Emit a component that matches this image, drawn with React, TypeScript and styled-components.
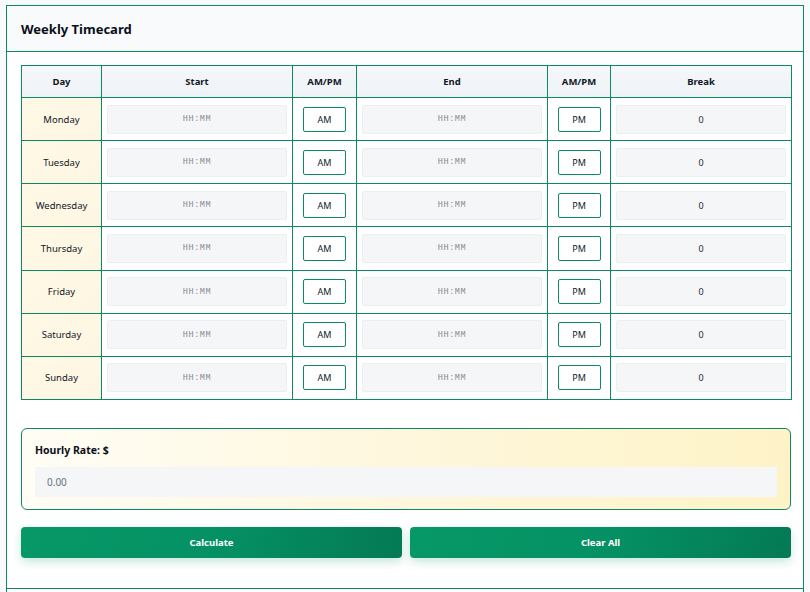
import React from "react";
import styled, { createGlobalStyle } from "styled-components";

const Global = createGlobalStyle`
  html, body { margin: 0; padding: 0; background: #f8fafb; }
  body { font-family: "Noto Sans", "Open Sans", sans-serif; color: #111827; }
  * { box-sizing: border-box; }
`;

const Page = styled.div`
  padding: 5px 6px 0 6px;
`;

const Card = styled.div`
  background: #ffffff;
  border: 1px solid #0e8a62;
  border-bottom: none;
  min-height: 600px;
`;

const Header = styled.div`
  height: 46px;
  display: flex;
  align-items: center;
  padding: 0 14px;
  background: #f8fafc;
  border-bottom: 1px solid #0e8a62;
`;

const Title = styled.h1`
  margin: 0;
  font-size: 13px;
  font-weight: 700;
  color: #0b0f19;
`;

const Body = styled.div`
  padding: 13px 12px 30px 14px;
  display: flex;
  flex-direction: column;
`;

const Table = styled.table`
  width: 770px;
  border-collapse: collapse;
  table-layout: fixed;
  border: 1px solid #0e8a62;
`;

const Th = styled.th`
  height: 32px;
  border: 1px solid #0e8a62;
  background: linear-gradient(180deg, #f5f7fa 0%, #eef2f6 100%);
  font-size: 9.5px;
  font-weight: 700;
  color: #111827;
  text-align: center;
  padding: 0;
`;

const Td = styled.td<{ $day?: boolean }>`
  height: 43.15px;
  border: 1px solid #0e8a62;
  padding: 0 5px;
  text-align: center;
  vertical-align: middle;
  font-size: 9.5px;
  color: #111827;
  background: ${(p) => (p.$day ? "linear-gradient(135deg, #fef8e6 0%, #fdf6e2 100%)" : "#ffffff")};
`;

const TimeInput = styled.input`
  width: 100%;
  height: 29px;
  border: 1px solid #eceef1;
  background: #f5f6f8;
  border-radius: 2px;
  text-align: center;
  font-family: "Liberation Mono", "DejaVu Sans Mono", monospace;
  font-size: 8.5px;
  font-weight: 400;
  color: #374151;
  outline: none;
  &::placeholder { color: #868a91; letter-spacing: 0.6px; }
`;

const NumInput = styled(TimeInput)`
  font-family: "Noto Sans", sans-serif;
  font-size: 9px;
  color: #1f2937;
`;

const PeriodBox = styled.div`
  width: 43px;
  height: 25px;
  margin: 0 auto;
  border: 1px solid #0e8a62;
  border-radius: 2px;
  background: #fff;
  display: flex;
  align-items: center;
  justify-content: center;
  font-size: 9px;
  color: #111827;
`;

const RateBox = styled.div`
  margin-top: 28px;
  width: 770px;
  height: 82px;
  border: 1px solid #0e8a62;
  border-radius: 6px;
  background: linear-gradient(90deg, #fffdf5 0%, #fef6d8 60%, #fef3c7 100%);
  padding: 13px 13px 0 13px;
  display: flex;
  flex-direction: column;
  gap: 9px;
`;

const RateLabel = styled.label`
  font-size: 10.5px;
  font-weight: 700;
  color: #0b0f19;
  line-height: 16px;
`;

const RateInput = styled.input`
  width: 100%;
  height: 30px;
  border: none;
  background: #f5f6f8;
  padding: 0 12px;
  font-family: "Noto Sans", sans-serif;
  font-size: 10px;
  color: #374151;
  outline: none;
  &::placeholder { color: #6b7280; }
`;

const Buttons = styled.div`
  margin-top: 17px;
  width: 770px;
  display: grid;
  grid-template-columns: 1fr 1fr;
  gap: 8px;
`;

const Button = styled.button`
  height: 31px;
  border: none;
  border-radius: 4px;
  background: linear-gradient(100deg, #079867 0%, #059164 50%, #047a55 100%);
  color: #ffffff;
  font-family: "Noto Sans", sans-serif;
  font-size: 9.5px;
  font-weight: 700;
  box-shadow: 0 4px 10px rgba(5, 150, 105, 0.22);
  cursor: pointer;
`;

const Footer = styled.div`
  border-top: 1px solid #0e8a62;
  height: 20px;
`;

const days = ["Monday", "Tuesday", "Wednesday", "Thursday", "Friday", "Saturday", "Sunday"];

export default function App() {
  return (
    <Page>
      <Global />
      <Card>
        <Header>
          <Title>Weekly Timecard</Title>
        </Header>
        <Body>
          <Table>
            <colgroup>
              <col style={{ width: 80 }} />
              <col style={{ width: 191 }} />
              <col style={{ width: 64 }} />
              <col style={{ width: 191 }} />
              <col style={{ width: 63 }} />
              <col style={{ width: 181 }} />
            </colgroup>
            <thead>
              <tr>
                <Th>Day</Th>
                <Th>Start</Th>
                <Th>AM/PM</Th>
                <Th>End</Th>
                <Th>AM/PM</Th>
                <Th>Break</Th>
              </tr>
            </thead>
            <tbody>
              {days.map((d) => (
                <tr key={d}>
                  <Td $day>{d}</Td>
                  <Td><TimeInput placeholder="HH:MM" /></Td>
                  <Td><PeriodBox>AM</PeriodBox></Td>
                  <Td><TimeInput placeholder="HH:MM" /></Td>
                  <Td><PeriodBox>PM</PeriodBox></Td>
                  <Td><NumInput defaultValue="0" /></Td>
                </tr>
              ))}
            </tbody>
          </Table>
          <RateBox>
            <RateLabel>Hourly Rate: $</RateLabel>
            <RateInput placeholder="0.00" />
          </RateBox>
          <Buttons>
            <Button>Calculate</Button>
            <Button>Clear All</Button>
          </Buttons>
        </Body>
        <Footer />
      </Card>
    </Page>
  );
}
